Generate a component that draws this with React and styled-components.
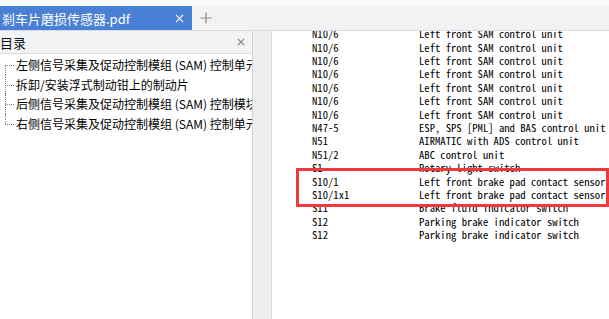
import React from 'react';
import styled, { createGlobalStyle } from 'styled-components';

const GlobalStyle = createGlobalStyle`
    html, body {
        margin: 0;
        padding: 0;
        background: #ffffff;
        overflow: hidden;
    }
`;

const Window = styled.div`
    width: 609px;
    height: 319px;
    display: flex;
    flex-direction: column;
    font-family: "Noto Sans CJK SC", "Noto Sans", sans-serif;
    background: #ffffff;
`;

const TopStrip = styled.div`
    height: 6px;
    background: #f9fafb;
`;

const TabBar = styled.div`
    height: 24px;
    display: flex;
    align-items: stretch;
    background: #f1f2f4;
    border-bottom: 1px solid #d9dbde;
`;

const Tab = styled.div`
    width: 192px;
    display: flex;
    align-items: center;
    justify-content: space-between;
    padding: 0 8px 0 2px;
    box-sizing: border-box;
    background: #4a7fd6;
    color: #ffffff;
    font-size: 13px;
    white-space: nowrap;
`;

const IconButton = styled.span`
    display: flex;
    align-items: center;
    justify-content: center;
    width: ${props => props.size}px;
    height: ${props => props.size}px;
    margin-left: ${props => props.offset || 0}px;
`;

const Main = styled.div`
    flex: 1;
    display: flex;
    min-height: 0;
`;

const Sidebar = styled.div`
    width: 252px;
    display: flex;
    flex-direction: column;
    border-right: 1px solid #cfd1d4;
    overflow: hidden;
`;

const SidebarHeader = styled.div`
    height: 22px;
    display: flex;
    align-items: center;
    justify-content: space-between;
    padding-right: 7px;
    background: #f2f3f5;
    border-bottom: 1px solid #dcdee1;
    font-size: 13px;
    color: #111111;
`;

const Tree = styled.ul`
    list-style: none;
    margin: 0;
    padding: 1px 0 0 0;
`;

const TreeItem = styled.li`
    position: relative;
    height: 19.5px;
    line-height: 19.5px;
    padding-left: 16px;
    font-size: 12px;
    color: #000000;
    white-space: nowrap;
    overflow: hidden;

    &::before {
        content: '';
        position: absolute;
        left: 5px;
        top: 10px;
        width: 9px;
        border-top: 1px dotted #7a7a7a;
    }

    &::after {
        content: '';
        position: absolute;
        left: 5px;
        top: ${props => (props.first ? '10px' : '0')};
        height: ${props => (props.last ? '10px' : 'auto')};
        bottom: ${props => (props.last ? 'auto' : '0')};
        border-left: 1px dotted #7a7a7a;
    }
`;

const Gutter = styled.div`
    width: 18px;
    background: #eeeeee;
    border-right: 1px solid #dddddd;
`;

const Page = styled.div`
    flex: 1;
    position: relative;
    overflow: hidden;
    background: #ffffff;
`;

const Table = styled.div`
    display: grid;
    grid-template-columns: 107px auto;
    grid-auto-rows: 13.4px;
    margin-top: -3.7px;
    padding-left: 40px;
    font-family: "Noto Sans Mono CJK JP", "Liberation Mono", monospace;
    font-size: 10.67px;
    line-height: 13.4px;
    color: #000000;
    white-space: pre;
`;

const Cell = styled.div`
    overflow: visible;
`;

const Highlight = styled.div`
    position: absolute;
    left: 24px;
    top: 137px;
    width: 313px;
    height: 39px;
    box-sizing: border-box;
    border: 3px solid #ee3a3a;
`;

const tocItems = [
    '左侧信号采集及促动控制模组 (SAM) 控制单元',
    '拆卸/安装浮式制动钳上的制动片',
    '后侧信号采集及促动控制模组 (SAM) 控制模块',
    '右侧信号采集及促动控制模组 (SAM) 控制单元',
];

const rows = [
    ['N10/6', 'Left front SAM control unit'],
    ['N10/6', 'Left front SAM control unit'],
    ['N10/6', 'Left front SAM control unit'],
    ['N10/6', 'Left front SAM control unit'],
    ['N10/6', 'Left front SAM control unit'],
    ['N10/6', 'Left front SAM control unit'],
    ['N10/6', 'Left front SAM control unit'],
    ['N47-5', 'ESP, SPS [PML] and BAS control unit'],
    ['N51', 'AIRMATIC with ADS control unit'],
    ['N51/2', 'ABC control unit'],
    ['S1', 'Rotary light switch'],
    ['S10/1', 'Left front brake pad contact sensor'],
    ['S10/1x1', 'Left front brake pad contact sensor'],
    ['S11', 'Brake fluid indicator switch'],
    ['S12', 'Parking brake indicator switch'],
    ['S12', 'Parking brake indicator switch'],
];

const CloseIcon = ({ color, size }) => (
    <svg width={size} height={size} viewBox="0 0 10 10">
        <path d="M1 1 L9 9 M9 1 L1 9" stroke={color} strokeWidth="1.3" fill="none" />
    </svg>
);

const PlusIcon = () => (
    <svg width="12" height="12" viewBox="0 0 12 12">
        <path d="M6 0.5 V11.5 M0.5 6 H11.5" stroke="#8a8a8a" strokeWidth="1.2" fill="none" />
    </svg>
);

const App = () => {
    return (
        <Window>
            <GlobalStyle />
            <TopStrip />
            <TabBar>
                <Tab>
                    刹车片磨损传感器.pdf
                    <CloseIcon color="#ffffff" size={9} />
                </Tab>
                <IconButton size={24} offset={2}>
                    <PlusIcon />
                </IconButton>
            </TabBar>
            <Main>
                <Sidebar>
                    <SidebarHeader>
                        目录
                        <CloseIcon color="#7a7a7a" size={8} />
                    </SidebarHeader>
                    <Tree>
                        {tocItems.map((item, i) => (
                            <TreeItem key={i} first={i === 0} last={i === tocItems.length - 1}>
                                {item}
                            </TreeItem>
                        ))}
                    </Tree>
                </Sidebar>
                <Gutter />
                <Page>
                    <Table>
                        {rows.map(([code, desc], i) => (
                            <React.Fragment key={i}>
                                <Cell>{code}</Cell>
                                <Cell>{desc}</Cell>
                            </React.Fragment>
                        ))}
                    </Table>
                    <Highlight />
                </Page>
            </Main>
        </Window>
    );
};

export default App;
